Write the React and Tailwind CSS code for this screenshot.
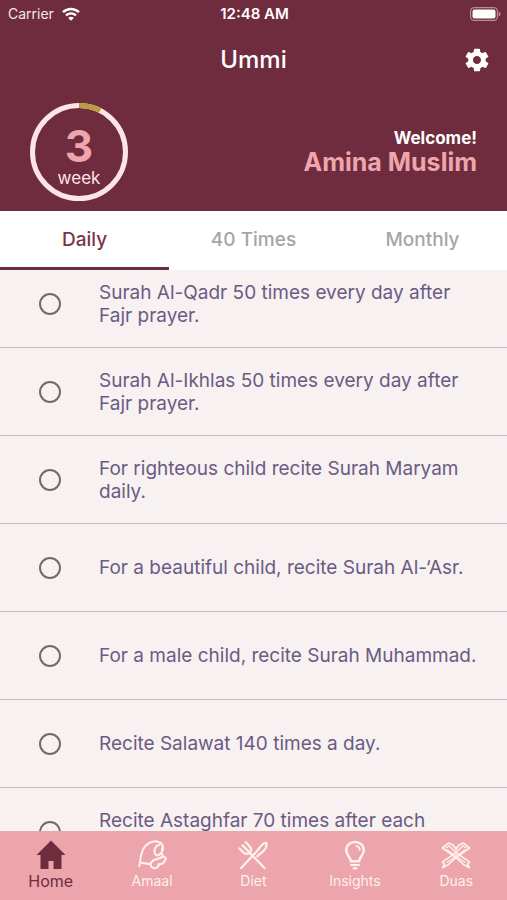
import React, { useLayoutEffect, useRef, useState } from "react";
import { IoMdSettings } from "react-icons/io";

const TABS = ["Daily", "40 Times", "Monthly"];

const TASKS = [
  "Surah Al-Qadr 50 times every day after Fajr prayer.",
  "Surah Al-Ikhlas 50 times every day after Fajr prayer.",
  "For righteous child recite Surah Maryam daily.",
  "For a beautiful child, recite Surah Al-‘Asr.",
  "For a male child, recite Surah Muhammad.",
  "Recite Salawat 140 times a day.",
  "Recite Astaghfar 70 times after each prayer.",
];

const iconProps = {
  viewBox: "0 0 30 30",
  className: "size-[30px]",
  fill: "none",
  stroke: "currentColor",
  strokeWidth: 2,
  strokeLinecap: "round",
  strokeLinejoin: "round",
  "aria-hidden": true,
};

function HomeIcon() {
  return (
    <svg {...iconProps} fill="currentColor" stroke="none">
      <path d="M15 0.5 L0.5 15 H4.5 V29 H12.5 V21 H17.5 V29 H25.5 V15 H29.5 Z" />
    </svg>
  );
}

function AmaalIcon() {
  return (
    <svg {...iconProps} strokeWidth={2.1}>
      <path d="M3 22.5 C3.5 14 6.5 6 12.5 2.8 C17 0.6 22.5 0.8 25 4.2 C26.5 7 26.2 9.5 25 11.5" />
      <path d="M3 22.5 L2.2 26.2 M3 22.5 C7 23.2 10 24.2 14 23.8" />
      <path d="M22.5 4.8 C18.8 5.5 17 9 17.6 12.5 C18 15 20 16 21.8 14.8 C24.8 13 26 10.8 25 8.5" />
      <path d="M23 14.2 C26 13.4 26.6 16 24.4 17.4 C27.4 15.8 29.6 17.8 28.2 20.6 C26.8 23.2 24.5 24.6 21.5 24.2" />
      <path d="M24.4 17.4 L18.5 19.5 C14.5 20.8 12.8 23.5 14 26.2 C15.5 28.8 19 28.8 21 26.5 L22.5 24.3" />
    </svg>
  );
}

function DietIcon() {
  return (
    <svg {...iconProps} strokeWidth={2.3}>
      <path d="M1.5 8.5 L5.2 12.4 C7.2 14.4 10 14.4 11.8 12.6 C13.6 10.8 13.4 8.4 11.5 6.3 L7.8 2.2" />
      <path d="M4.6 5.4 L26.5 28" />
      <path d="M3.2 28 L19 11 M17.2 13 L23.5 5.6 C25 3.9 27 2.6 28.3 3 C29 5.6 28 8.6 25.6 10.8 L19.4 16.2" />
    </svg>
  );
}

function InsightsIcon() {
  return (
    <svg {...iconProps} strokeWidth={2.6}>
      <path d="M10.8 21.2 C10.8 17 6.2 15.5 6.2 10 C6.2 5.2 10 2 15 2 C20 2 23.8 5.2 23.8 10 C23.8 15.5 19.2 17 19.2 21.2 Z" />
      <path d="M16.5 6 C18.5 6.5 19.6 7.8 19.8 9.8" strokeWidth={1.8} />
      <path d="M11 25 H19 M13.5 28.3 H16.5" strokeWidth={2.2} />
    </svg>
  );
}

function DuasIcon() {
  return (
    <svg {...iconProps} strokeWidth={1.7}>
      <path d="M15 9.5 C13.5 6 11 4 7.5 3.2 L1.3 8 L15 17.6 L28.7 8 L22.5 3.2 C19 4 16.5 6 15 9.5 Z" />
      <path d="M5 7.8 L8 5.8 L15 12.6 L22 5.8 L25 7.8" strokeWidth={1.4} />
      <path d="M15 12.6 L28.6 22 L26.6 23.8 L28.2 27.6 L22.4 24.4 L15 17.6" />
      <path d="M15 12.6 L1.4 22 L3.4 23.8 L1.8 27.6 L7.6 24.4 L15 17.6" />
      <path d="M6 9.4 L24 22.4 M24 9.4 L6 22.4" strokeWidth={1.2} />
    </svg>
  );
}

const NAV_ITEMS = [
  { label: "Home", Icon: HomeIcon },
  { label: "Amaal", Icon: AmaalIcon },
  { label: "Diet", Icon: DietIcon },
  { label: "Insights", Icon: InsightsIcon },
  { label: "Duas", Icon: DuasIcon },
];

function StatusBar() {
  return (
    <div className="grid grid-cols-3 items-center h-7 pl-2 pr-1.5">
      <div className="flex items-center gap-2 text-sm">
        <span className="text-[#f5e6ea]">Carrier</span>
        <svg viewBox="0 0 18 14" className="w-[18px] h-3.5" fill="none" stroke="currentColor" strokeWidth="2.5" aria-hidden="true">
          <path d="M1 5.2 C5.5 0.8 12.5 0.8 17 5.2" />
          <path d="M4 8.4 C7 5.7 11 5.7 14 8.4" />
          <path d="M9 13.8 L6.2 10.9 C7.8 9.4 10.2 9.4 11.8 10.9 Z" fill="currentColor" stroke="none" />
        </svg>
      </div>
      <div className="text-center text-[15px] font-semibold whitespace-nowrap">12:48 AM</div>
      <svg viewBox="0 0 31 14" className="w-[31px] h-3.5 justify-self-end" aria-hidden="true">
        <rect x="0.6" y="0.6" width="26.8" height="12.8" rx="3.6" fill="none" stroke="#b58d99" strokeWidth="1.2" />
        <rect x="2.5" y="2.5" width="23" height="9" rx="2" fill="white" />
        <path d="M28.7 4.5 C31.2 5.3 31.2 8.7 28.7 9.5 Z" fill="#b58d99" />
      </svg>
    </div>
  );
}

function WeekRing({ week, total }) {
  const circumference = 2 * Math.PI * 46.5;
  const done = (circumference * week) / total;
  return (
    <div className="grid place-items-center size-[98px]">
      <svg viewBox="0 0 98 98" className="col-start-1 row-start-1 size-full" fill="none" strokeWidth="5" aria-hidden="true">
        <circle cx="49" cy="49" r="46.5" stroke="#fce4e8" />
        <circle
          cx="49"
          cy="49"
          r="46.5"
          stroke="#bb9c3c"
          strokeDasharray={`${done} ${circumference}`}
          transform="rotate(-90 49 49)"
        />
      </svg>
      <div className="col-start-1 row-start-1 flex flex-col items-center pt-2">
        <span className="text-[44px] leading-[44px] font-bold text-[#eea5ad]">{week}</span>
        <span className="text-[17px] leading-5 text-[#fce4e8]">week</span>
      </div>
    </div>
  );
}

function TaskRow({ text, checked, onSelect }) {
  return (
    <li className="border-b border-[#c3bec0]">
      <label className="flex items-center h-[87px] pl-[39px] pr-5 gap-[38px]">
        <input
          type="radio"
          checked={checked}
          onChange={onSelect}
          className="appearance-none shrink-0 size-[22px] rounded-full border-2 border-[#716c6c] checked:bg-[#6f2c3e]"
        />
        <span className="text-[19px] leading-[23px] text-[#6b5b83]">{text}</span>
      </label>
    </li>
  );
}

export default function App() {
  const [tab, setTab] = useState("Daily");
  const [page, setPage] = useState("Home");
  const [done, setDone] = useState([]);
  const listRef = useRef(null);

  useLayoutEffect(() => {
    listRef.current.scrollTop = 10;
  }, []);

  return (
    <div className="flex flex-col h-dvh bg-[#f7f1f1] font-[Inter,sans-serif]">
      <header className="shrink-0 bg-[#6f2c3e] text-white pb-2.5">
        <StatusBar />
        <div className="grid grid-cols-[1fr_auto_1fr] items-center h-16 px-4">
          <h1 className="col-start-2 text-2xl font-medium">Ummi</h1>
          <button aria-label="Settings" className="justify-self-end">
            <IoMdSettings className="size-7" />
          </button>
        </div>
        <div className="flex items-center justify-between px-[30px] pt-[11px]">
          <WeekRing week={3} total={40} />
          <div className="text-right font-bold">
            <p className="text-[17px] leading-5">Welcome!</p>
            <p className="text-[25px] leading-7 text-[#eea5ad]">Amina Muslim</p>
          </div>
        </div>
      </header>

      <div role="tablist" className="shrink-0 grid grid-cols-3 h-[59px] bg-white">
        {TABS.map(name => (
          <button
            key={name}
            role="tab"
            aria-selected={tab === name}
            onClick={() => setTab(name)}
            className={`border-b-[3px] pt-0.5 text-[19px] font-medium ${
              tab === name ? "border-[#6f2c3e] text-[#7b3448]" : "border-transparent text-[#a5a5a5]"
            }`}
          >
            {name}
          </button>
        ))}
      </div>

      <ul ref={listRef} className="flex-1 min-h-0 overflow-y-auto [scrollbar-width:none]">
        {TASKS.map((text, i) => (
          <TaskRow
            key={text}
            text={text}
            checked={done.includes(i)}
            onSelect={() => setDone(d => [...d, i])}
          />
        ))}
      </ul>

      <nav className="shrink-0 grid grid-cols-5 h-[69px] bg-[#eba5ab]">
        {NAV_ITEMS.map(({ label, Icon }) => (
          <button
            key={label}
            onClick={() => setPage(label)}
            className={`flex flex-col items-center pt-[9px] ${
              page === label ? "text-[#6f2c3e] text-base" : "text-[#fff0ec] text-sm"
            }`}
          >
            <Icon />
            <span className="leading-[22px]">{label}</span>
          </button>
        ))}
      </nav>
    </div>
  );
}
